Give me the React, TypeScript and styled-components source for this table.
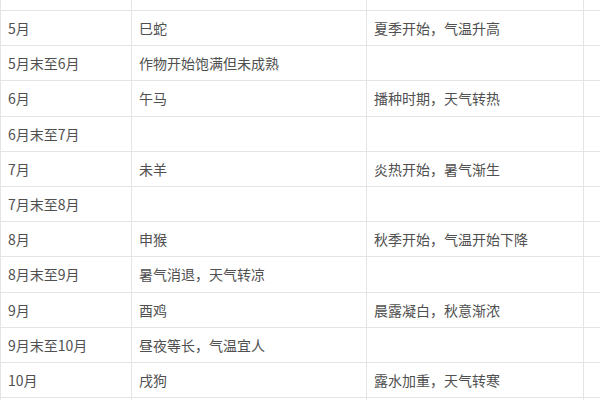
import * as React from 'react';
import styled, { createGlobalStyle } from 'styled-components';

const GlobalStyle = createGlobalStyle`
  html, body {
    margin: 0;
    padding: 0;
    background: #fff;
    overflow: hidden;
  }
`;

const Table = styled.div`
  width: 600px;
  height: 400px;
  overflow: hidden;
  border-left: 1px solid #e4e4e4;
  box-sizing: border-box;
  font-family: 'Noto Sans CJK SC', 'Microsoft YaHei', sans-serif;
  font-size: 14px;
  color: #505050;
`;

const Row = styled.div<{ $h: number }>`
  display: grid;
  grid-template-columns: 131px 235px 217px 40px;
  height: ${p => p.$h}px;
`;

const Cell = styled.div`
  box-sizing: border-box;
  display: flex;
  align-items: center;
  padding: 0 7px;
  border-right: 1px solid #e4e4e4;
  border-bottom: 1px solid #e4e4e4;
  white-space: nowrap;
  overflow: hidden;
`;

const rows: [string, string, string][] = [
  ['5月', '巳蛇', '夏季开始，气温升高'],
  ['5月末至6月', '作物开始饱满但未成熟', ''],
  ['6月', '午马', '播种时期，天气转热'],
  ['6月末至7月', '', ''],
  ['7月', '未羊', '炎热开始，暑气渐生'],
  ['7月末至8月', '', ''],
  ['8月', '申猴', '秋季开始，气温开始下降'],
  ['8月末至9月', '暑气消退，天气转凉', ''],
  ['9月', '酉鸡', '晨露凝白，秋意渐浓'],
  ['9月末至10月', '昼夜等长，气温宜人', ''],
  ['10月', '戌狗', '露水加重，天气转寒'],
  ['', '', ''],
];

export default function App() {
  return (
    <>
      <GlobalStyle />
      <Table>
        <Row $h={11}>
          <Cell />
          <Cell />
          <Cell />
          <Cell />
        </Row>
        {rows.map((r, i) => (
          <Row key={i} $h={35.2}>
            <Cell>{r[0]}</Cell>
            <Cell>{r[1]}</Cell>
            <Cell>{r[2]}</Cell>
            <Cell />
          </Row>
        ))}
      </Table>
    </>
  );
}
